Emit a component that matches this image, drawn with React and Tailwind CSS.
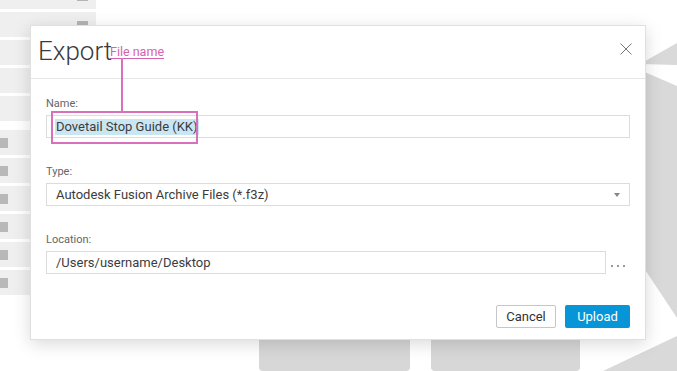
import React from "react";

const Field = ({ label, children, className = "" }) => (
  <div className={className}>
    <div className="text-[11px] leading-[14px] text-[#666] mb-[4px]">{label}</div>
    {children}
  </div>
);

const App = () => {
  const topRows = [0, 1, 2, 3, 4];
  const lowerRows = [0, 1, 2, 3, 4, 5];

  return (
    <div className="relative w-[677px] h-[371px] overflow-hidden bg-white font-['Roboto',sans-serif]">
      {/* blurred app behind the dialog */}
      <div className="absolute inset-0 flex">
        <div className="w-[96px] flex flex-col">
          <div className="flex flex-col gap-[3px] -mt-[16px]">
            {topRows.map((r) => (
              <div key={r} className="h-[25px] bg-[#efefef] flex items-center justify-end pr-[8px]">
                <div className="w-[11px] h-[8px] bg-[#b4b4b4]" />
              </div>
            ))}
          </div>
          <div className="flex flex-col gap-[3px] mt-[9px]">
            {lowerRows.map((r) => (
              <div key={r} className="h-[25px] w-[60px] bg-[#efefef] flex items-center">
                <div className="w-[8px] h-[10px] bg-[#b8b8b8]" />
              </div>
            ))}
          </div>
        </div>
        <div className="flex-1 flex flex-col justify-end">
          <div className="flex gap-[21px] pl-[163px]">
            <div className="w-[151px] h-[50px] bg-[#d7d7d7] rounded-b-[4px]" />
            <div className="w-[149px] h-[50px] bg-[#d7d7d7] rounded-b-[4px]" />
          </div>
        </div>
        <svg className="absolute inset-0" width="677" height="371" viewBox="0 0 677 371">
          <polygon points="640,64 677,43 677,65" fill="#d9d9d9" />
          <polygon points="640,70 677,86 677,318 640,262" fill="#d9d9d9" />
          <polygon points="603,371 677,336 677,371" fill="#d9d9d9" />
        </svg>
      </div>

      {/* dialog */}
      <div className="relative pt-[25px] pl-[30px]">
        <div className="relative w-[616px] h-[315px] bg-white border border-[#e0e0e0] shadow-[0_4px_16px_rgba(0,0,0,0.15)]">
          <div className="h-[53px] border-b border-[#e6e6e6] flex justify-between items-start">
            <h2 className="pl-[7px] pt-[10px] text-[26px] leading-[30px] font-light text-[#3a3a3a]">
              Export
            </h2>
            <svg className="mt-[17px] mr-[13px]" width="12" height="12" viewBox="0 0 12 12">
              <path d="M0.5 0.5 L11.5 11.5 M11.5 0.5 L0.5 11.5" stroke="#777" strokeWidth="1" fill="none" />
            </svg>
          </div>

          <div className="px-[15px] pt-[18px] text-[13px] text-[#3c3c3c]">
            <Field label="Name:">
              <div className="h-[23px] border border-[#dcdcdc] flex items-center pl-[8px]">
                <span className="bg-[#cbe6f3] leading-[16px] px-[1px]">Dovetail Stop Guide (KK)</span>
              </div>
            </Field>

            <Field label="Type:" className="mt-[27px]">
              <div className="h-[23px] border border-[#dcdcdc] flex items-center justify-between pl-[9px] pr-[9px]">
                <span className="leading-[16px]">Autodesk Fusion Archive Files (*.f3z)</span>
                <svg width="6" height="4" viewBox="0 0 6 4">
                  <polygon points="0,0 6,0 3,4" fill="#888" />
                </svg>
              </div>
            </Field>

            <Field label="Location:" className="mt-[27px]">
              <div className="flex items-center">
                <div className="flex-1 h-[23px] border border-[#dcdcdc] flex items-center pl-[9px]">
                  <span className="leading-[16px]">/Users/username/Desktop</span>
                </div>
                <div className="w-[24px] flex justify-center gap-[4px] pt-[6px]">
                  <span className="w-[2px] h-[2px] rounded-full bg-[#777]" />
                  <span className="w-[2px] h-[2px] rounded-full bg-[#777]" />
                  <span className="w-[2px] h-[2px] rounded-full bg-[#777]" />
                </div>
              </div>
            </Field>

            <div className="mt-[31px] flex justify-end gap-[9px]">
              <button className="w-[60px] h-[23px] border border-[#c6c6c6] rounded-[2px] bg-white text-[13px] text-[#333]">
                Cancel
              </button>
              <button className="w-[65px] h-[23px] rounded-[2px] bg-[#0696d7] text-[13px] text-white">
                Upload
              </button>
            </div>
          </div>

          {/* annotation overlay */}
          <span className="absolute left-[79px] top-[18px] text-[12.5px] leading-[15px] text-[#d462b0] underline underline-offset-[2px]">
            File name
          </span>
          <svg className="absolute left-0 top-0 pointer-events-none" width="200" height="130" viewBox="0 0 200 130">
            <line x1="91" y1="32" x2="91" y2="85" stroke="#d870bc" strokeWidth="2" />
            <rect x="21" y="86" width="145" height="31" fill="none" stroke="#d870bc" strokeWidth="2" />
          </svg>
        </div>
      </div>
    </div>
  );
};

export default App;
